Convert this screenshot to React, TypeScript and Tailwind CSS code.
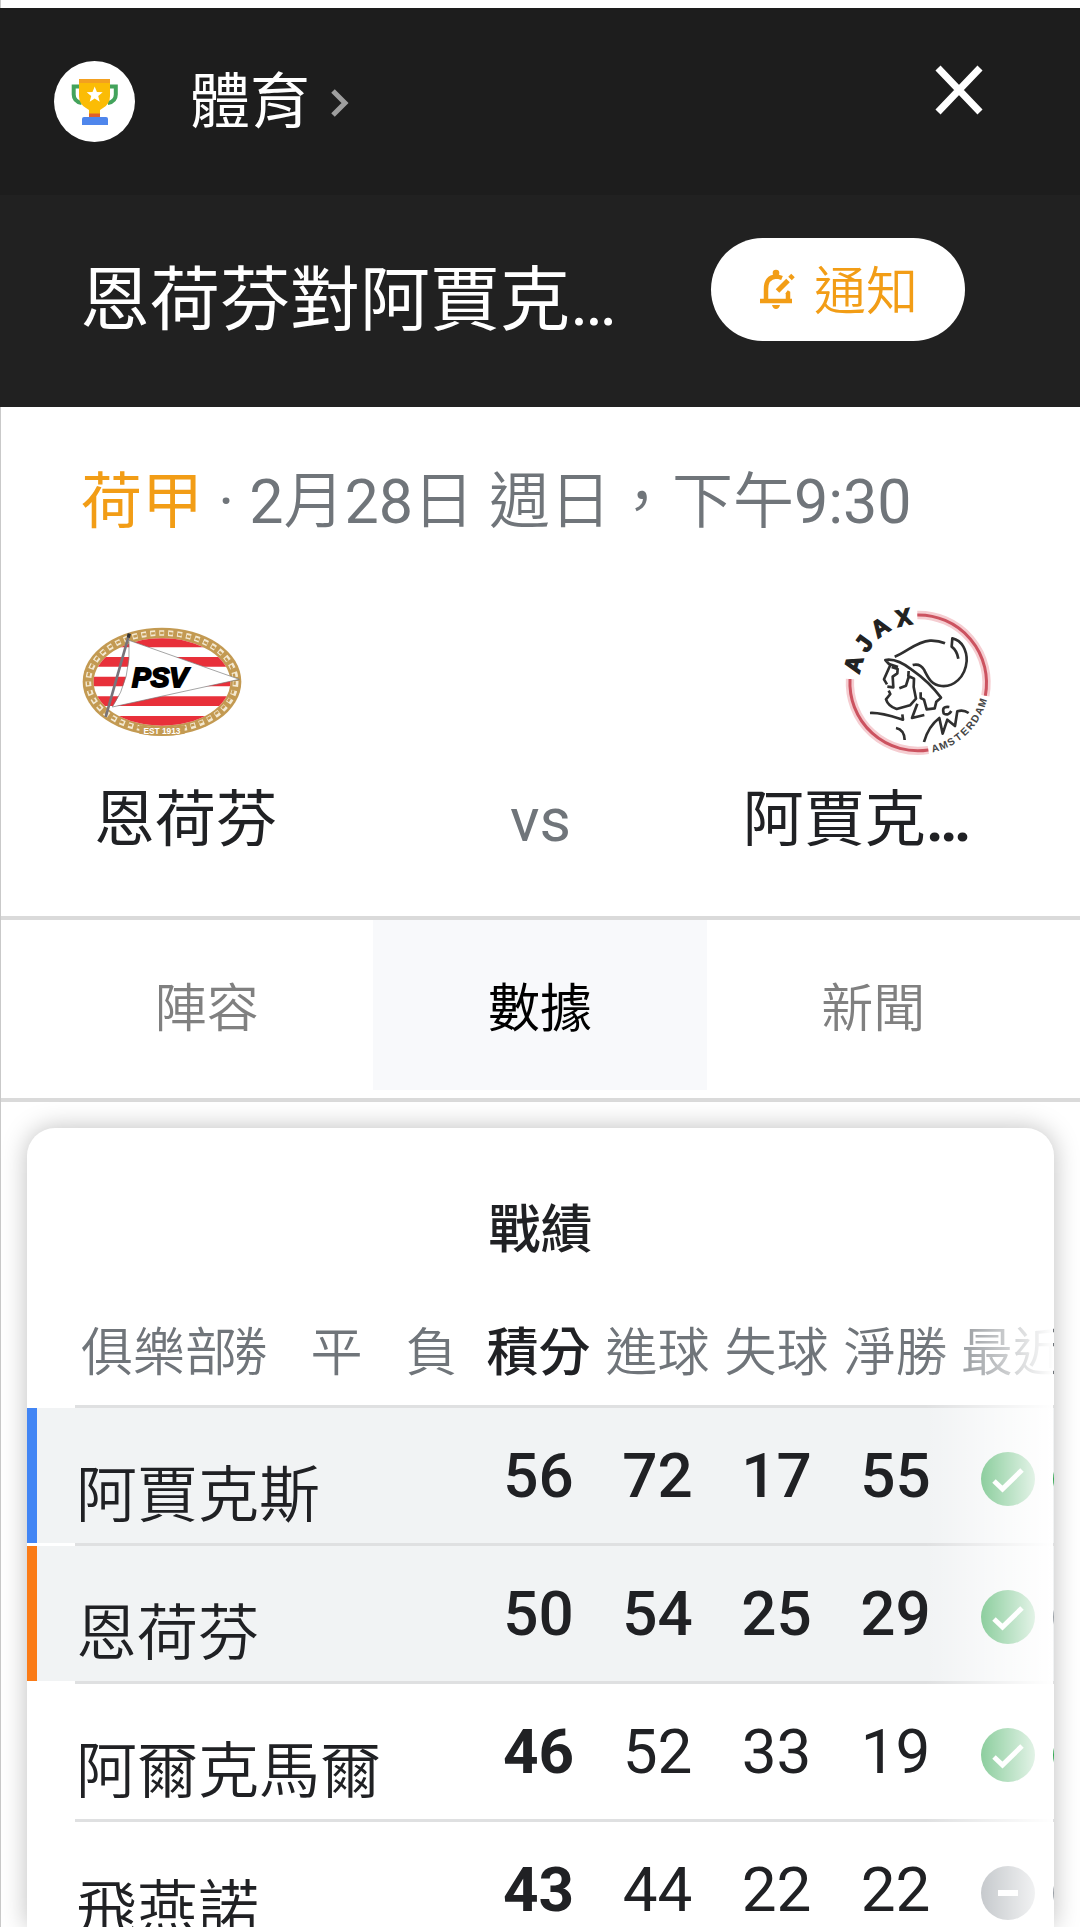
import React from "react";

type Result = "win" | "draw";

interface Team {
  name: string;
  stats: [number, number, number, number];
  highlighted?: boolean;
  bar?: string;
  last: Result;
  next: Result;
}

const teams: Team[] = [
  { name: "阿賈克斯", stats: [56, 72, 17, 55], highlighted: true, bar: "bg-[#4285f4]", last: "win", next: "win" },
  { name: "恩荷芬", stats: [50, 54, 25, 29], highlighted: true, bar: "bg-[#fa7b17]", last: "win", next: "draw" },
  { name: "阿爾克馬爾", stats: [46, 52, 33, 19], last: "win", next: "win" },
  { name: "飛燕諾", stats: [43, 44, 22, 22], last: "draw", next: "draw" },
];

const tabs = ["陣容", "數據", "新聞"];

function TrophyIcon() {
  return (
    <svg viewBox="54 61 81 81" className="size-[81px] shrink-0" aria-hidden="true">
      <circle cx="94.5" cy="101.5" r="40.5" fill="#fff" />
      <path d="M82 86.5h-8.300v8q0 7 8 8.500M107.500 86.500h8.300v8q0 7-8 8.500" fill="none" stroke="#43a35c" strokeWidth="4" />
      <path d="M79 79h31v17q0 8-7 12l-3 2v5H89v-5l-3-2q-7-4-7-12z" fill="#fbbc05" />
      <path d="M79 79h31v4H79z" fill="#f3a01f" />
      <path d="M89 113.500h11v4H89z" fill="#e0602b" />
      <path d="M82 119q0-2 2-2h22q2 0 2 2v6H82z" fill="#4f86ec" />
      <path d="M94.700 86.500l2.200 5.400 5.800.4-4.500 3.700 1.500 5.700-5-3.100-5 3.100 1.500-5.700-4.500-3.700 5.800-.4z" fill="#fff" />
    </svg>
  );
}

function BellEditIcon() {
  return (
    <svg viewBox="758 270 38 43" className="h-[43px] w-[38px]" fill="none" stroke="#f29d16" strokeWidth="4.500" aria-hidden="true">
      <path d="M760 303h32" />
      <path d="M766 303v-12c0-8 4-12 10-12.500 2 0 3 .3 6 1.500" />
      <path d="M788 303v-8l-1.500-1" />
      <path d="M777.500 293l10.500-10.500M790 280.500l3-3" strokeWidth="5" />
      <circle cx="776" cy="275" r="3.300" fill="#f29d16" stroke="none" />
      <path d="M772 307h8q-1 4-4 4t-4-4z" fill="#f29d16" stroke="none" />
    </svg>
  );
}

function PsvLogo() {
  return (
    <svg viewBox="66 80 480 330" className="h-[110px] w-40" role="img" aria-label="PSV">
      <defs>
        <clipPath id="psv-field">
          <ellipse cx="306" cy="245" rx="205" ry="131" />
        </clipPath>
      </defs>
      <ellipse cx="306" cy="244" rx="238" ry="162" fill="#c39a52" />
      <ellipse cx="306" cy="244" rx="221" ry="146" fill="none" stroke="#f3e9d2" strokeWidth="17" strokeDasharray="15 12" />
      <ellipse cx="304" cy="243" rx="220" ry="145" fill="none" stroke="#c39a52" strokeWidth="7" strokeDasharray="11 16" />
      <path d="M238 374q68 14 136 0v26q-68 14-136 0z" fill="#c39a52" />
      <g clipPath="url(#psv-field)">
        <path d="M90 110h440v270H90z" fill="#fff" />
        <path d="M90 110h440v31H90zM90 170h440v29H90zM90 229h440v29H90zM90 288h440v29H90zM90 347h440v33H90z" fill="#e8303a" />
      </g>
      <path d="M207 120L538 237 157 320Q215 235 207 120z" fill="#fff" stroke="#777" strokeWidth="2" />
      <path d="M208 100L137 350" stroke="#77737a" strokeWidth="8" />
      <path d="M208 100l-3 12" stroke="#333" strokeWidth="10" />
      <text x="216" y="259" fontFamily="Liberation Sans, sans-serif" fontSize="84" fontWeight="700" fontStyle="italic" fill="#000" stroke="#000" strokeWidth="6">PSV</text>
      <text x="306" y="401" textAnchor="middle" fontFamily="Liberation Sans, sans-serif" fontSize="25" fontWeight="700" fill="#fff">EST 1913</text>
    </svg>
  );
}

function AjaxLogo() {
  const crest = [
    { letter: "A", angle: -74 },
    { letter: "J", angle: -54 },
    { letter: "A", angle: -34 },
    { letter: "X", angle: -12 },
  ];
  return (
    <svg viewBox="60 40 456 471" className="h-[157px] w-[152px] overflow-visible" role="img" aria-label="Ajax Amsterdam">
      <g fill="none" stroke="#f5cdd1" strokeWidth="25">
        <path d="M292 76A204 204 0 0 1 496 318" />
        <path d="M90 268A204 204 0 0 0 325 481" />
      </g>
      <g fill="none" stroke="#cc5360" strokeWidth="9">
        <path d="M292 76A204 204 0 0 1 496 318" />
        <path d="M90 268A204 204 0 0 0 325 481" />
      </g>
      <g fill="#222" fontFamily="Liberation Sans, sans-serif" fontWeight="700" textAnchor="middle">
        {crest.map((c, i) => (
          <text key={i} x="293" y="103" fontSize="70" stroke="#222" strokeWidth="4" transform={`rotate(${c.angle} 293 279)`}>{c.letter}</text>
        ))}
        {"AMSTERDAM".split("").map((letter, i) => (
          <text key={i} x="293" y="493" fontSize="31" fill="#444" transform={`rotate(${-15 - i * 7.2} 293 279)`}>{letter}</text>
        ))}
      </g>
      <g fill="none" stroke="#2f2f2f" strokeWidth="8" strokeLinejoin="round">
        <path d="M224 201C262 187 288 156 330 153q25-1 45 8" />
        <path d="M415 207q-4-24-20-36l2-25c30 6 44 38 43 68-4 50-40 78-75 75-32-3-41-26-53-49q-12-20-34-14" />
        <path d="M234 232l-27-9-11-12q34-6 79 29 52 36 88 84l-14 12-5 20-24 3-8-29-10-5v-17" />
        <path d="M211 226l-19 43 9 15M215 232l18 6-1 13-14 10 2 32-18-2M206 303l5 10-13 16q6 20 32 29l40-11 18-20-7-35 1-25-17-8 1-15M266 262l-8 26-20 8" />
        <path d="M150 370c32-2 64 9 99 20l-2-16M228 415q25 5 26 36M292 342l-16 43 37-9M312 457q13-47 46-72l10 47 14-42 23 19 7-44q18-6 34 5M388 352q-24-4-17 19 14 9 23-7" />
      </g>
    </svg>
  );
}

function ResultIcon({ result }: { result: Result }) {
  return result === "win" ? (
    <svg viewBox="0 0 54 54" className="size-[54px] shrink-0" role="img" aria-label="勝">
      <circle cx="27" cy="27" r="27" fill="#34a853" />
      <path d="M13 29l8.500 8L41 18" fill="none" stroke="#fff" strokeWidth="5" />
    </svg>
  ) : (
    <svg viewBox="0 0 54 54" className="size-[54px] shrink-0" role="img" aria-label="平">
      <circle cx="27" cy="27" r="27" fill="#9aa0a6" />
      <path d="M17 27h20" fill="none" stroke="#fff" strokeWidth="6" />
    </svg>
  );
}

const line = "border-b-[3px] border-[#dfe0e1]";

function Standings() {
  return (
    <section className="relative mx-[26px] mt-[26px] min-h-0 flex-1 rounded-t-[28px] bg-white shadow-[0_0_26px_rgba(0,0,0,0.26)]">
      <h2 className="pt-[71px] text-center text-[52px] leading-[64px] font-medium text-[#202124]">戰績</h2>
      <div className="relative mt-[14px] overflow-hidden">
        <table className="w-[1260px] table-fixed border-separate border-spacing-0">
          <colgroup>
            <col className="w-12" />
            <col className="w-[119px]" />
            <col className="w-[95px]" />
            <col className="w-[95px]" />
            <col className="w-[95px]" />
            <col className="w-[119px]" />
            <col className="w-[119px]" />
            <col className="w-[119px]" />
            <col className="w-[119px]" />
            <col />
          </colgroup>
          <thead>
            <tr className="h-[131px] text-[52px] leading-[64px] whitespace-nowrap text-[#70757a] [&>th]:p-0 [&>th]:pt-[26px] [&>th]:font-[350]">
              <td />
              <th scope="col" className={`relative z-10 text-left ${line}`}>
                <span className="ml-[6px] inline-block w-[156px] bg-white">俱樂部</span>
              </th>
              <th scope="col" className={line}>勝</th>
              <th scope="col" className={line}>平</th>
              <th scope="col" className={line}>負</th>
              <th scope="col" className={`text-[#202124] ${line}`}><span className="font-medium">積分</span></th>
              <th scope="col" className={line}>進球</th>
              <th scope="col" className={line}>失球</th>
              <th scope="col" className={line}>淨勝</th>
              <th scope="col" className={`text-left ${line}`}><span className="ml-[6px]">最近</span></th>
            </tr>
          </thead>
          <tbody>
            {teams.map((team) => (
              <tr key={team.name} className={`h-[138px] text-[62px] leading-[72px] text-[#202124] [&>*]:bg-clip-padding [&>*]:p-0 ${team.highlighted ? "[&>*]:bg-[#f1f3f4]" : ""}`}>
                <td className="border-b-[3px] border-white">
                  <div className={`h-[135px] w-[10px] ${team.bar ?? ""}`} />
                </td>
                <th scope="row" colSpan={4} className={`text-left text-[61px] font-[350] ${line}`}>
                  <div className="pt-10 pl-px">{team.name}</div>
                </th>
                {team.stats.map((value, i) => (
                  <td key={i} className={`text-center ${line} ${i === 0 && !team.highlighted ? "font-bold" : team.highlighted ? "font-medium" : "font-normal"}`}>
                    {value}
                  </td>
                ))}
                <td className={line}>
                  <div className="flex gap-[18px] pt-[6px] pl-[26px]">
                    <ResultIcon result={team.last} />
                    <ResultIcon result={team.next} />
                  </div>
                </td>
              </tr>
            ))}
          </tbody>
        </table>
        <div className="pointer-events-none absolute inset-y-0 right-px w-32 bg-gradient-to-r from-white/0 to-white" />
      </div>
    </section>
  );
}

export default function App() {
  return (
    <div className="flex h-screen flex-col overflow-hidden bg-white font-['Roboto','Noto_Sans_CJK_TC',sans-serif]" lang="zh-Hant">
      <div className="h-2 shrink-0 border-l border-[#c9c9c9]" />
      <header className="shrink-0 text-white">
        <div className="flex h-[187px] items-start justify-between bg-[#1d1d1d] pt-[53px] pr-[97px] pl-[54px]">
          <a href="#sports" className="flex items-center">
            <TrophyIcon />
            <span className="ml-[55px] pt-[2px] text-[60px] leading-[76px]">體育</span>
            <svg viewBox="0 0 20 30" className="mt-[2px] ml-5 h-[30px] w-5" fill="none" stroke="#9e9e9e" strokeWidth="5" aria-hidden="true">
              <path d="M3 3l12 12L3 27" />
            </svg>
          </a>
          <button type="button" aria-label="關閉" className="mt-1">
            <svg viewBox="0 0 48 50" className="h-[50px] w-12" fill="none" stroke="#fff" strokeWidth="7" aria-hidden="true">
              <path d="M3 3l42 44M45 3L3 47" />
            </svg>
          </button>
        </div>
        <div className="flex h-[212px] items-start justify-between bg-[#212121] pr-[115px] pl-20">
          <h1 className="mt-[62px] text-[70px] leading-[88px]">恩荷芬對阿賈克…</h1>
          <button type="button" className="mt-[43px] flex h-[103px] w-[254px] items-center justify-center gap-[18px] rounded-full bg-white text-[52px] leading-[64px] text-[#f29d16]">
            <BellEditIcon />
            <span className="pt-[6px] font-[350]">通知</span>
          </button>
        </div>
      </header>
      <main className="flex min-h-0 flex-1 flex-col border-l border-[#c9c9c9]">
        <p className="mt-[57px] shrink-0 pl-20 text-[61px] leading-[76px] whitespace-nowrap text-[#70757a]">
          <a href="#league" className="text-[#f29d16]">荷甲</a> · 2<span className="font-[350]">月</span>28<span className="font-[350]">日 週日，下午</span>9:30
        </p>
        <div className="mt-[63px] flex shrink-0 items-center justify-between pr-[88px] pl-[81px]">
          <PsvLogo />
          <AjaxLogo />
        </div>
        <div className="mt-[22px] grid shrink-0 grid-cols-[1fr_auto_1fr] items-center px-[93px] pb-[58px] text-[61px] leading-[76px] text-[#202124]">
          <span>恩荷芬</span>
          <span className="text-[#70757a]">vs</span>
          <span className="pr-4 text-right">阿賈克<span className="font-bold">…</span></span>
        </div>
        <nav className="shrink-0 border-y-4 border-[#dadada] pr-10 pb-2 pl-[39px]" role="tablist">
          <div className="grid grid-cols-3">
            {tabs.map((tab, i) => (
              <button
                key={tab}
                type="button"
                role="tab"
                aria-selected={i === 1}
                className={`h-[170px] pt-[10px] text-[52px] leading-[64px] ${i === 1 ? "bg-[#f8f9fb] text-black" : "font-[350] text-[#808080]"}`}
              >
                {tab}
              </button>
            ))}
          </div>
        </nav>
        <Standings />
      </main>
    </div>
  );
}
